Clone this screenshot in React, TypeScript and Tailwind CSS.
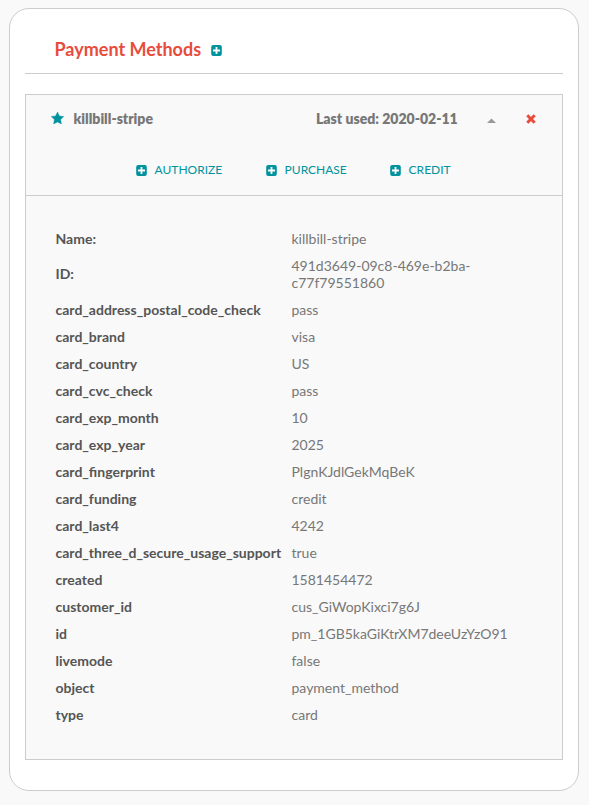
const rows = [
  ['Name:', 'killbill-stripe'],
  ['ID:', '491d3649-09c8-469e-b2ba-c77f79551860'],
  ['card_address_postal_code_check', 'pass'],
  ['card_brand', 'visa'],
  ['card_country', 'US'],
  ['card_cvc_check', 'pass'],
  ['card_exp_month', '10'],
  ['card_exp_year', '2025'],
  ['card_fingerprint', 'PlgnKJdlGekMqBeK'],
  ['card_funding', 'credit'],
  ['card_last4', '4242'],
  ['card_three_d_secure_usage_support', 'true'],
  ['created', '1581454472'],
  ['customer_id', 'cus_GiWopKixci7g6J'],
  ['id', 'pm_1GB5kaGiKtrXM7deeUzYzO91'],
  ['livemode', 'false'],
  ['object', 'payment_method'],
  ['type', 'card'],
];

function PlusSquare({ className = '' }: { className?: string }) {
  return (
    <svg viewBox="0 0 11 11" className={`h-[11px] w-[11px] shrink-0 ${className}`}>
      <rect x=".2" width="10.6" height="11" rx="2" fill="#00939d" />
      <path d="M5.5 2v7M2 5.5h7" stroke="#fff" strokeWidth="1.8" />
    </svg>
  );
}

function Action({ label, className }: { label: string; className: string }) {
  return (
    <a className={`flex items-center gap-[7.6px] ${className}`}>
      <PlusSquare />
      <span>{label}</span>
    </a>
  );
}

export default function App() {
  return (
    <div className="h-[805px] w-[589px] bg-[#f9f9f9] pt-[8px] pl-[9px] font-[Lato,sans-serif] text-[14px] text-[#777]">
      <main className="h-[783px] w-[570px] rounded-[20px] border border-[#ccc] bg-white px-[15px]">
        <h1 className="flex h-[65px] items-center border-b border-[#ccc] pt-[16px] pl-[29.5px] text-[18px] font-bold text-[#e74c3c]">
          <span className="w-[156.5px]">Payment Methods</span>
          <PlusSquare className="mt-[3px]" />
        </h1>
        <section className="mt-[20px] h-[666px] border border-[#ccc] bg-[#f9f9f9]">
          <header className="h-[101px] border-b border-[#ccc]">
            <div className="flex h-[46px] items-center pl-[24.5px] font-extrabold">
              <svg viewBox="0 0 13 12" className="mr-[10px] h-[12px] w-[13px] shrink-0">
                <path d="M6.5 0 8.4 3.9 12.8 4.6 9.6 7.6 10.4 12 6.5 9.9 2.6 12 3.4 7.6 .2 4.6 4.6 3.9Z" fill="#00939d" stroke="#00939d" strokeWidth=".4" strokeLinejoin="round" />
              </svg>
              <span className="w-[242.5px]">killbill-stripe</span>
              <span className="w-[171px]">Last used: 2020-02-11</span>
              <svg viewBox="0 0 9 5" className="mt-[4px] h-[5px] w-[9px] shrink-0"><path d="M0 5 4.5 .5 9 5Z" fill="#999" /></svg>
              <svg viewBox="0 0 10 10" className="mt-[2px] ml-[30px] h-[10px] w-[10px] shrink-0"><path d="m1.3 1.3 7.4 7.4m0-7.4L1.3 8.7" stroke="#e74c3c" strokeWidth="3" /></svg>
            </div>
            <div className="mt-px flex h-[56px] items-center pl-[110px] text-[12px] text-[#00939d]">
              <Action label="AUTHORIZE" className="w-[130px]" />
              <Action label="PURCHASE" className="w-[124px]" />
              <Action label="CREDIT" className="" />
            </div>
          </header>
          <table className="mt-[29px] ml-[24.5px] w-[486px] border-collapse text-[14px] leading-[17px]">
            <tbody>
              {rows.map(([name, value]) => (
                <tr key={name}>
                  <th className={`w-[236px] px-[5px] pt-[5px] text-left font-bold text-[#555] ${name === 'ID:' ? 'pb-[7px]' : 'pb-[5px]'}`}>{name}</th>
                  <td className="p-[5px]">{value}</td>
                </tr>
              ))}
            </tbody>
          </table>
        </section>
      </main>
    </div>
  );
}
